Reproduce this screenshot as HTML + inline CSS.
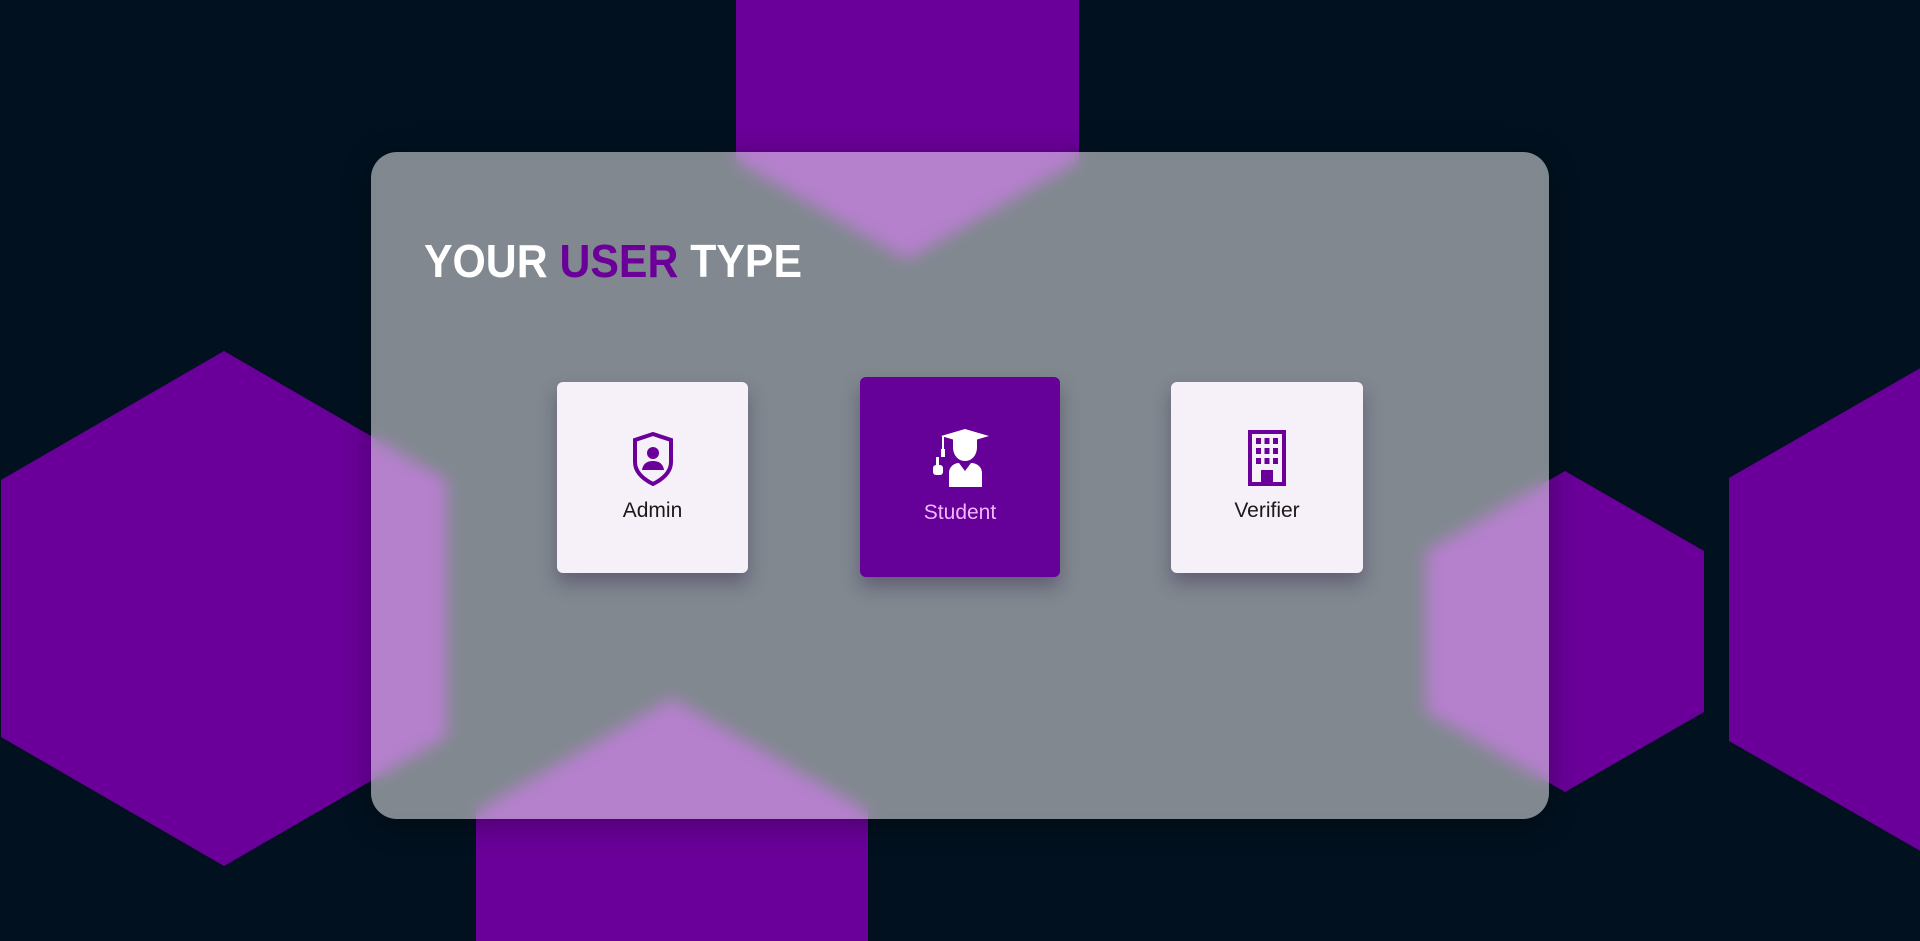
<!DOCTYPE html>
<html><head><meta charset="utf-8"><style>
html,body{margin:0;padding:0;overflow:hidden;width:1920px;height:941px}
body{background:#02111f;position:relative;font-family:"Liberation Sans",sans-serif}
svg.bg{position:absolute;left:0;top:0;display:block}
.panel{position:absolute;left:371px;top:152px;width:1178px;height:667px;border-radius:26px;background:rgba(255,255,255,0.5);backdrop-filter:blur(8px);-webkit-backdrop-filter:blur(8px);box-shadow:0 6px 30px rgba(0,0,0,0.3)}
.title{position:absolute;left:424px;top:234px;font-size:46px;font-weight:bold;color:#fff;transform:scaleX(0.93);transform-origin:left;white-space:nowrap}
.title span{color:#6a0099}
.card{position:absolute;background:#f6f1f8;border-radius:6px;box-shadow:0 10px 18px rgba(40,20,70,0.35);text-align:center}
.card .lbl{position:absolute;left:0;right:0;font-size:21px;color:#1a1a1a}
.card svg{position:absolute;left:50%;transform:translateX(-50%)}
</style></head><body>
<svg class="bg" width="1920" height="941">
<g fill="#6a0099">
<polygon points="907,-136 1079,-37 1079,161 907,260 736,161 736,-37"/>
<polygon points="224,351 447,480 447,737 224,866 1,737 1,480"/>
<polygon points="672,698 868,811 868,1038 672,1151 476,1038 476,811"/>
<polygon points="1565,471 1704,551 1704,712 1565,792 1426,712 1426,551"/>
<polygon points="1957,347 2185,478 2185,741 1957,872 1729,741 1729,478"/>
</g>
</svg>
<div class="panel"></div>
<div class="title">YOUR <span>USER</span> TYPE</div>

<div class="card" style="left:557px;top:382px;width:191px;height:191px">
<svg style="top:50px" width="44" height="54" viewBox="0 0 44 54">
<path d="M22 2 L40 8 V30 C40 40 32 47 22 52 C12 47 4 40 4 30 V8 Z" fill="none" stroke="#6a0099" stroke-width="4"/>
<circle cx="22" cy="21" r="6" fill="#6a0099"/>
<path d="M11 38 C12 31 17 29 22 29 C27 29 32 31 33 38 Z" fill="#6a0099"/>
</svg>
<div class="lbl" style="top:117px">Admin</div>
</div>

<div class="card" style="left:860px;top:377px;width:200px;height:200px;background:#650099">
<svg style="top:50px" width="66" height="62" viewBox="0 0 66 62">
<polygon points="38,2 62,9 38,16 14,9" fill="#fff"/>
<path d="M26 12 H50 V20 C50 28 45 34 38 34 C31 34 26 28 26 20 Z" fill="#fff"/>
<line x1="16" y1="9" x2="16" y2="26" stroke="#fff" stroke-width="2"/>
<rect x="14" y="22" width="4" height="8" fill="#fff"/>
<path d="M22 60 V46 C22 40 27 36 32 36 L38 44 L44 36 C50 36 55 40 55 46 V60 Z" fill="#fff"/>
<rect x="6" y="38" width="10" height="10" rx="3" fill="#fff"/>
<rect x="9" y="30" width="3" height="10" fill="#fff"/>
</svg>
<div class="lbl" style="top:124px;color:#f2b6ff">Student</div>
</div>

<div class="card" style="left:1171px;top:382px;width:192px;height:191px">
<svg style="top:48px" width="40" height="56" viewBox="0 0 40 56">
<rect x="3" y="2" width="34" height="52" fill="none" stroke="#6a0099" stroke-width="4"/>
<g fill="#6a0099">
<rect x="9" y="8" width="5" height="6"/><rect x="17.5" y="8" width="5" height="6"/><rect x="26" y="8" width="5" height="6"/>
<rect x="9" y="18" width="5" height="6"/><rect x="17.5" y="18" width="5" height="6"/><rect x="26" y="18" width="5" height="6"/>
<rect x="9" y="28" width="5" height="6"/><rect x="17.5" y="28" width="5" height="6"/><rect x="26" y="28" width="5" height="6"/>
<rect x="14" y="40" width="12" height="14"/>
</g>
</svg>
<div class="lbl" style="top:117px">Verifier</div>
</div>
</body></html>
